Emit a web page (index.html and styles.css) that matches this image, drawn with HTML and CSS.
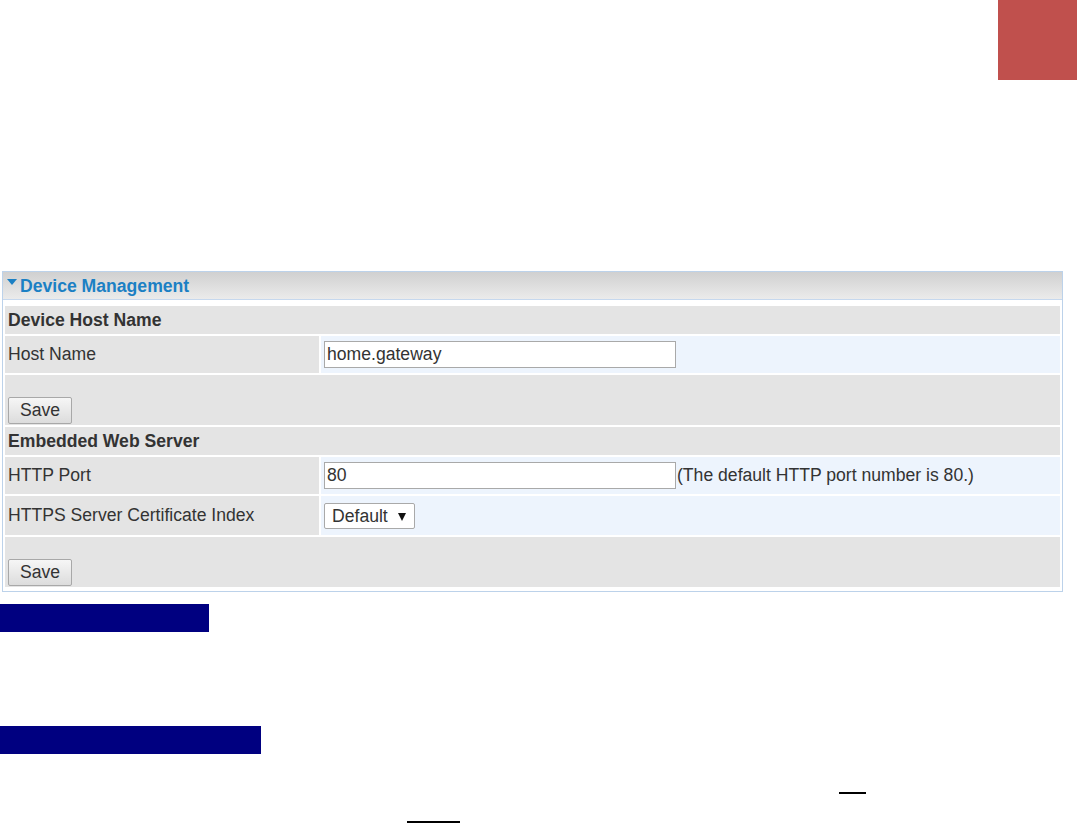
FILE: index.html
```html
<!DOCTYPE html>
<html>
<head>
  <meta charset="UTF-8">
  <title>Device Management</title>
  <link rel="stylesheet" href="styles.css">
</head>
<body>
  <div class="page-top">
    <div class="corner-mark"></div>
  </div>

  <div class="panel">
    <div class="panel-head"><span class="arrow"></span>Device Management</div>
    <table class="setting-table">
      <tr>
        <td class="section" colspan="2">Device Host Name</td>
      </tr>
      <tr class="row-host">
        <td class="label">Host Name</td>
        <td class="value"><input type="text" class="text-input" value="home.gateway"></td>
      </tr>
      <tr class="row-save">
        <td class="save-cell" colspan="2"><button class="save-button">Save</button></td>
      </tr>
      <tr>
        <td class="section" colspan="2">Embedded Web Server</td>
      </tr>
      <tr class="row-port">
        <td class="label">HTTP Port</td>
        <td class="value"><input type="text" class="text-input" value="80"><span class="note">(The default HTTP port number is 80.)</span></td>
      </tr>
      <tr class="row-cert">
        <td class="label">HTTPS Server Certificate Index</td>
        <td class="value">
          <span class="select-wrap">
            <select class="select-box">
              <option>Default</option>
            </select>
          </span>
        </td>
      </tr>
      <tr class="row-save">
        <td class="save-cell" colspan="2"><button class="save-button">Save</button></td>
      </tr>
    </table>
  </div>

  <div class="doc-bar bar-short"></div>
  <div class="doc-bar bar-long"></div>
  <div class="doc-rule rule-one"></div>
  <div class="doc-rule rule-two"></div>
</body>
</html>
```

FILE: styles.css
```css
body {
  margin: 0;
  font-family: "Liberation Sans", Arial, sans-serif;
  background: #fff;
  color: #333;
  overflow: hidden;
}
.page-top {
  height: 80px;
  display: flex;
  justify-content: flex-end;
}
.corner-mark {
  width: 79px;
  height: 80px;
  background-color: #c0504d;
}

/* panel */
.panel {
  margin: 191px 0 0 2px;
  width: 1061px;
  box-sizing: border-box;
  border: 1px solid #bcd2ea;
}
.panel-head {
  height: 27px;
  line-height: 28px;
  padding-left: 4px;
  border-bottom: 1px solid #c6d8ee;
  background: linear-gradient(#d0d0d0, #ebebeb);
  color: #1b80c4;
  font-weight: bold;
  font-size: 17.6px;
}
.arrow {
  display: inline-block;
  width: 0;
  height: 0;
  border-left: 5px solid transparent;
  border-right: 5px solid transparent;
  border-top: 6px solid #1b80c4;
  vertical-align: 7px;
  margin-right: 3px;
}
.setting-table {
  width: 100%;
  border-spacing: 2px;
  margin-top: 4px;
  margin-bottom: 2px;
  font-size: 17.6px;
}
.setting-table td {
  padding: 0 3px;
}
.section {
  height: 28px;
  background-color: #e4e4e4;
  font-weight: bold;
  color: #333;
}
.label {
  width: 308px;
  background-color: #e4e4e4;
  color: #333;
}
.value {
  background-color: #edf4fd;
}
.row-host td {
  height: 37px;
}
.row-port td {
  height: 37px;
}
.row-cert td {
  height: 39px;
}
.row-save td {
  height: 49px;
}
.save-cell {
  background-color: #e4e4e4;
  vertical-align: bottom;
  padding-bottom: 1px !important;
}

/* controls */
.text-input {
  width: 352px;
  height: 27px;
  box-sizing: border-box;
  padding: 0 2px;
  border: 1px solid #a9a9a9;
  font-family: inherit;
  font-size: 17.6px;
  color: #333;
  vertical-align: middle;
}
.note {
  margin-left: 1px;
  vertical-align: middle;
  color: #333;
}
.save-button {
  width: 64px;
  height: 27px;
  padding: 0;
  border: 1px solid #a8a8a8;
  border-radius: 2px;
  background: linear-gradient(#f6f6f6, #dcdcdc);
  font-family: inherit;
  font-size: 17.6px;
  color: #333;
}
.select-wrap {
  position: relative;
  display: inline-block;
}
.select-box {
  appearance: none;
  -webkit-appearance: none;
  width: 91px;
  height: 26px;
  padding: 0 20px 0 7px;
  border: 1px solid #a9a9a9;
  border-radius: 2px;
  background: #fff;
  font-family: inherit;
  font-size: 17.6px;
  color: #333;
}
.select-wrap::after {
  content: "";
  position: absolute;
  right: 9px;
  top: 10px;
  width: 0;
  height: 0;
  border-left: 4px solid transparent;
  border-right: 4px solid transparent;
  border-top: 8px solid #111;
  pointer-events: none;
}

/* document below */
.doc-bar {
  height: 28px;
  background-color: #000080;
}
.bar-short {
  width: 209px;
  margin-top: 12px;
}
.bar-long {
  width: 261px;
  margin-top: 94px;
}
.doc-rule {
  height: 2px;
  background-color: #000;
}
.rule-one {
  width: 27px;
  margin: 38px 0 0 839px;
}
.rule-two {
  width: 53px;
  margin: 27px 0 0 407px;
}
```
